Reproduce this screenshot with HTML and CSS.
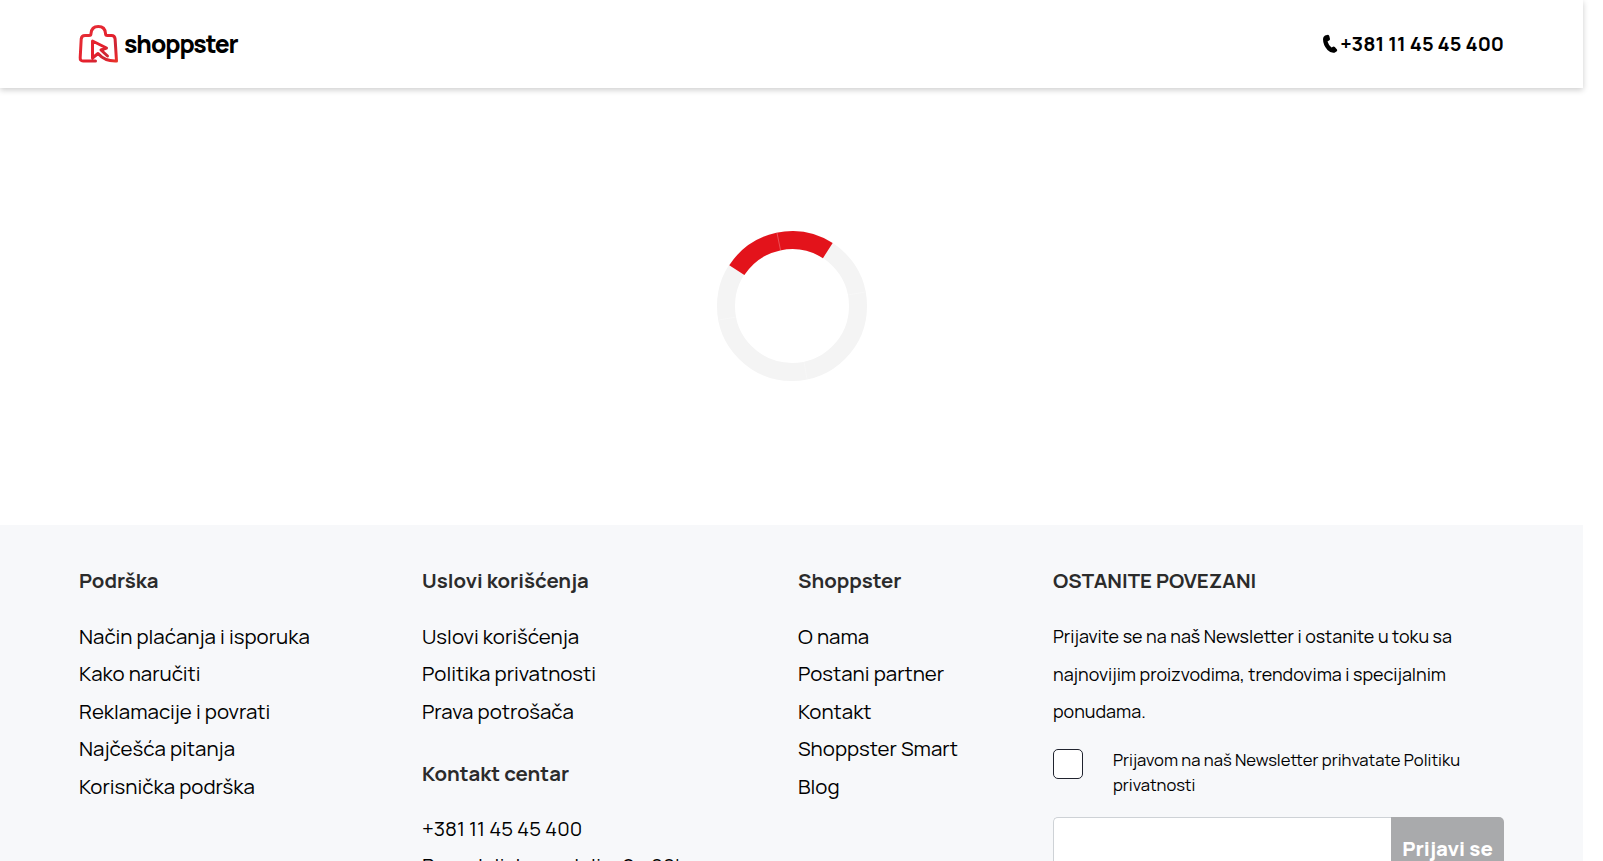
FILE: index.html
```html
<!DOCTYPE html>
<html lang="sr">
<head>
<meta charset="utf-8">
<title>Shoppster</title>
<link rel="stylesheet" href="styles.css">
</head>
<body>
<div class="page">
  <header class="header">
    <a class="logo">
      <svg class="logo-mark" width="42" height="42" viewBox="0 0 42 42" fill="none" stroke="url(#red)" stroke-width="3" stroke-linecap="round" stroke-linejoin="round">
        <defs><linearGradient id="red" x1="0" y1="0" x2="42" y2="42" gradientUnits="userSpaceOnUse"><stop offset="0" stop-color="#e6323a"/><stop offset=".55" stop-color="#e5202c"/><stop offset=".7" stop-color="#cc2836"/><stop offset=".82" stop-color="#e5252c"/><stop offset="1" stop-color="#ec4a2a"/></linearGradient></defs>
        <path d="M17.500 37H5Q2 37 2.200 33.500L3.200 15Q3.500 11.500 7 11.500H11Q13 11.500 13 9.500Q13.500 2.500 20.300 2.500T27.500 9.500Q27.500 11.500 29.500 11.500H33.500Q36.800 11.500 37.100 15L38.500 37Q27 37.500 20 29.500L14.500 34V17L28.500 24L23 26L29.500 32"/>
      </svg>
      <span class="wordmark">shoppster</span>
    </a>
    <a class="phone">
      <svg width="16" height="20" viewBox="0 0 16 20"><path d="M3 1.500L6 .8Q7 1 7.300 2L8 5Q8 6 7 6.500L5.500 7.500Q6.500 11 9.500 13.500L11 12.700Q12 12.400 12.800 13L15 15.500Q15.500 16.500 14.800 17.200L12.500 18.700Q9 19.500 5.500 16Q1 11 1 5Q1 2.500 3 1.500Z"/></svg>
      <span class="phone-number">+381 11 45 45 400</span>
    </a>
  </header>
  <main class="main">
    <svg class="spinner" width="150" height="150" viewBox="0 0 150 150" fill="none" stroke-width="18">
      <circle cx="75" cy="75" r="66" stroke="#f4f4f4"/>
      <path d="M19.800 39.200A66 66 0 0 1 110.800 19.600" stroke="#e3131b"/>
      <path d="M60 2L63.500 19" stroke="#ee6066" stroke-width=".8"/>
      <path d="M131 64L148 61M2 89L19 86M87 131L90 148" stroke="#f9f9f9" stroke-width=".6"/>
    </svg>
  </main>
  <footer class="footer">
    <section class="col support">
      <h3>Podrška</h3>
      <ul><li>Način plaćanja i isporuka</li><li>Kako naručiti</li><li>Reklamacije i povrati</li><li>Najčešća pitanja</li><li>Korisnička podrška</li></ul>
    </section>
    <section class="col terms">
      <h3>Uslovi korišćenja</h3>
      <ul><li>Uslovi korišćenja</li><li>Politika privatnosti</li><li>Prava potrošača</li></ul>
      <h3 class="contact-title">Kontakt centar</h3>
      <ul><li>+381 11 45 45 400</li><li>Ponedeljak - nedelja: 8 - 20h</li></ul>
    </section>
    <section class="col about">
      <h3>Shoppster</h3>
      <ul><li>O nama</li><li>Postani partner</li><li>Kontakt</li><li>Shoppster Smart</li><li>Blog</li></ul>
    </section>
    <section class="col newsletter">
      <h3>OSTANITE POVEZANI</h3>
      <p class="intro">Prijavite se na naš Newsletter i ostanite u toku sa<br>najnovijim proizvodima, trendovima i specijalnim<br>ponudama.</p>
      <div class="consent"><span class="checkbox"></span><span>Prijavom na naš Newsletter prihvatate Politiku<br>privatnosti</span></div>
      <div class="signup"><div class="email"></div><div class="submit">Prijavi se</div></div>
    </section>
  </footer>
</div>
</body>
</html>
```
FILE: styles.css
```css
* { box-sizing: border-box; }
body { margin: 0; height: 861px; overflow: hidden; background: #fff; color: #000; font-family: Manrope, Inter, sans-serif; }
.page { width: 1583px; height: 861px; }
.header { height: 88px; padding: 0 79px; display: flex; align-items: center; justify-content: space-between; box-shadow: 0 2px 6px rgba(0,0,0,.2); }
.logo { display: flex; align-items: center; gap: 4px; margin-left: -1px; }
.logo-mark { margin-top: 1px; }
.wordmark { font-size: 24.5px; line-height: 30px; font-weight: 800; letter-spacing: -1.05px; }
.phone { display: flex; align-items: center; gap: 2px; font-weight: 700; font-size: 20px; line-height: 28px; padding-bottom: 1px; }
.phone-number { padding-top: 1px; }
.main { height: 437px; display: flex; justify-content: center; padding-top: 143px; }
.footer { height: 336px; overflow: hidden; background: #f7f8fa; padding: 36px 79px 0; display: grid; grid-template-columns: 343px 376px 255px 451px; }
h3 { margin: 0 0 18.5px; font-size: 20.4px; line-height: 38px; font-weight: 700; color: #2b2b2b; white-space: nowrap; }
ul { list-style: none; margin: 0; padding: 0; }
li { font-size: 20.48px; line-height: 37.5px; white-space: nowrap; }
.contact-title { margin: 23.5px 0 18px; }
.intro { margin: 0; padding-top: .5px; font-size: 17.92px; line-height: 37.5px; white-space: nowrap; }
.consent { display: flex; gap: 30px; margin-top: 16px; font-size: 16.64px; line-height: 25px; white-space: nowrap; }
.checkbox { width: 30px; height: 30px; margin-top: 2px; border: 1px solid #20232e; border-radius: 5px; background: #fff; }
.signup { display: flex; height: 64px; margin-top: 20px; }
.email { flex: 1; background: #fff; border: 1px solid #ced2d6; border-right: 0; border-radius: 5px 0 0 5px; }
.submit { width: 113px; background: #a9aaac; border-radius: 0 5px 5px 0; color: #fff; font-size: 20.4px; font-weight: 800; line-height: 62px; text-align: center; }
```
